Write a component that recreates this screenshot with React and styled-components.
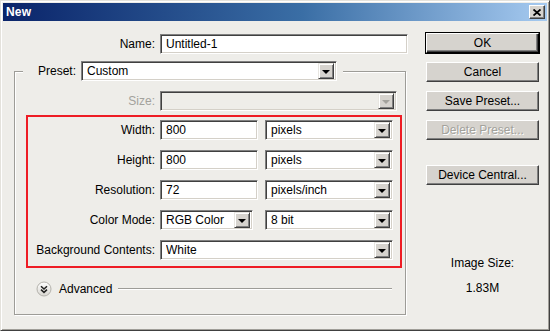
import * as React from "react";
import styled, { createGlobalStyle } from "styled-components";

const Global = createGlobalStyle`
  html, body { margin: 0; padding: 0; background: #eeede9; }
  body { font-family: "Liberation Sans", Arial, sans-serif; font-size: 12px; color: #000; }
`;

/* window frame */
const Window = styled.div`
  width: 550px;
  height: 331px;
  box-sizing: border-box;
  padding: 3px;
  background: #eeede9;
  border-top: 1px solid #e4e2dc;
  border-left: 1px solid #e4e2dc;
  border-right: 1px solid #404040;
  border-bottom: 1px solid #404040;
  box-shadow: inset 1px 1px 0 #fff, inset -1px -1px 0 #a09e98;
  display: flex;
  flex-direction: column;
`;

const TitleBar = styled.div`
  height: 18px;
  margin: -1px -1px 0 -1px;
  background: linear-gradient(to right, #0a246a 0%, #3a6ea5 55%, #a6caf0 100%);
  display: flex;
  align-items: center;
  justify-content: space-between;
  padding: 0 2px 0 3px;
`;

const Title = styled.span`
  color: #fff;
  font-weight: bold;
  font-size: 12px;
  letter-spacing: 0.2px;
`;

const CloseBox = styled.div`
  width: 14px;
  height: 12px;
  background: #d6d3ce;
  border-top: 1px solid #fff;
  border-left: 1px solid #fff;
  border-right: 1px solid #404040;
  border-bottom: 1px solid #404040;
  box-shadow: inset -1px -1px 0 #808080;
  display: flex;
  align-items: center;
  justify-content: center;
`;

const Body = styled.div`
  display: flex;
  flex: 1;
`;

const LeftCol = styled.div`
  width: 406px;
  display: flex;
  flex-direction: column;
`;

const RightCol = styled.div`
  width: 113px;
  margin-left: 16px;
  padding-top: 12px;
  display: flex;
  flex-direction: column;
  align-items: stretch;
`;

const Row = styled.div`
  display: flex;
  align-items: center;
  height: 20px;
  margin-top: ${(p) => p.$mt || 0}px;
`;

const Label = styled.span`
  box-sizing: border-box;
  width: ${(p) => p.$w}px;
  text-align: right;
  padding-right: 5px;
  flex-shrink: 0;
  white-space: nowrap;
  color: ${(p) => (p.$disabled ? "#a3a29c" : "#000")};
`;

const sunken = `
  box-sizing: border-box;
  border-top: 1px solid #808080;
  border-left: 1px solid #808080;
  border-right: 1px solid #fff;
  border-bottom: 1px solid #fff;
  box-shadow: inset 1px 1px 0 #404040, inset -1px -1px 0 #d4d0c8;
`;

const Field = styled.div`
  ${sunken}
  width: ${(p) => p.$w}px;
  height: 20px;
  background: ${(p) => (p.$disabled ? "#eeede9" : "#fff")};
  display: flex;
  align-items: center;
  padding-left: 5px;
  margin-right: ${(p) => p.$mr || 0}px;
`;

const FieldText = styled.span`
  flex: 1;
  white-space: nowrap;
  overflow: hidden;
`;

const ArrowBtn = styled.div`
  width: 16px;
  height: 16px;
  margin-right: 2px;
  box-sizing: border-box;
  background: #d6d3ce;
  border-top: 1px solid #e8e6e1;
  border-left: 1px solid #e8e6e1;
  border-right: 1px solid #404040;
  border-bottom: 1px solid #404040;
  box-shadow: inset 1px 1px 0 #fff, inset -1px -1px 0 #808080;
  display: flex;
  align-items: center;
  justify-content: center;
`;

const Tri = styled.span`
  width: 0;
  height: 0;
  border-left: 4px solid transparent;
  border-right: 4px solid transparent;
  border-top: 4px solid ${(p) => (p.$disabled ? "#a3a29c" : "#000")};
  margin-top: 1px;
`;

const Select = ({ w, value, disabled, mr }) => (
  <Field $w={w} $disabled={disabled} $mr={mr}>
    <FieldText>{value}</FieldText>
    <ArrowBtn>
      <Tri $disabled={disabled} />
    </ArrowBtn>
  </Field>
);

const Group = styled.fieldset`
  margin: 7px 0 0 10px;
  padding: 0 0 17px 0;
  width: 392px;
  box-sizing: border-box;
  border: 1px solid #9d9c97;
  box-shadow: inset 1px 1px 0 #fff, 1px 1px 0 #fff;
  min-width: 0;
`;

const Legend = styled.legend`
  margin-left: 8px;
  padding: 0 6px 0 8px;
  background: #eeede9;
  display: flex;
  align-items: center;
  height: 20px;
`;

const RedBox = styled.div`
  margin: 4px 0 0 11px;
  width: 376px;
  box-sizing: border-box;
  border: 2px solid #ee1c24;
  padding: 3px 0 6px 0;
  display: flex;
  flex-direction: column;
  gap: 10px;
`;

const AdvRow = styled.div`
  display: flex;
  align-items: center;
  margin: 13px 0 0 21px;
  height: 16px;
`;

const AdvText = styled.span`
  margin-left: 7px;
`;

const Rule = styled.div`
  height: 0;
  width: 274px;
  margin-left: 6px;
  border-top: 1px solid #9d9c97;
  border-bottom: 1px solid #fff;
`;

const Button = styled.div`
  height: 20px;
  box-sizing: border-box;
  margin-top: ${(p) => p.$mt || 0}px;
  background: #d6d3ce;
  border-top: 1px solid #fff;
  border-left: 1px solid #fff;
  border-right: 1px solid ${(p) => (p.$default ? "#000" : "#404040")};
  border-bottom: 1px solid ${(p) => (p.$default ? "#000" : "#404040")};
  box-shadow: ${(p) =>
    p.$default
      ? "inset -1px -1px 0 #404040, inset -2px -2px 0 #808080"
      : "inset -1px -1px 0 #808080"};
  outline: ${(p) => (p.$default ? "1px solid #000" : "none")};
  display: flex;
  align-items: center;
  justify-content: center;
  color: ${(p) => (p.$disabled ? "#a3a29c" : "#000")};
  text-shadow: ${(p) => (p.$disabled ? "1px 1px 0 #fff" : "none")};
`;

const Info = styled.div`
  text-align: center;
  margin-top: ${(p) => p.$mt}px;
  line-height: 14px;
`;

const ChevronIcon = () => (
  <svg width="16" height="16" viewBox="0 0 16 16">
    <defs>
      <linearGradient id="cg" x1="0" y1="0" x2="0" y2="1">
        <stop offset="0" stopColor="#ffffff" />
        <stop offset="1" stopColor="#d8d6d0" />
      </linearGradient>
    </defs>
    <circle cx="8" cy="8" r="7" fill="url(#cg)" stroke="#b4b2ac" />
    <path d="M5 5.2 L8 8 L11 5.2 M5 8.6 L8 11.4 L11 8.6" fill="none" stroke="#222" strokeWidth="1.5" />
  </svg>
);

const CloseIcon = () => (
  <svg width="8" height="7" viewBox="0 0 8 7">
    <path d="M0.5 0.5 L7.5 6.5 M7.5 0.5 L0.5 6.5" stroke="#000" strokeWidth="1.8" />
  </svg>
);

export default function App() {
  return (
    <>
      <Global />
      <Window>
        <TitleBar>
          <Title>New</Title>
          <CloseBox>
            <CloseIcon />
          </CloseBox>
        </TitleBar>
        <Body>
          <LeftCol>
            <Row $mt={13}>
              <Label $w={156}>Name:</Label>
              <Field $w={248}>
                <FieldText>Untitled-1</FieldText>
              </Field>
            </Row>
            <Group>
              <Legend>
                <Label $w={50}>Preset:</Label>
                <Select w={256} value="Custom" />
              </Legend>
              <Row $mt={10}>
                <Label $w={145} $disabled>Size:</Label>
                <Select w={237} value="" disabled />
              </Row>
              <RedBox>
                <Row>
                  <Label $w={132}>Width:</Label>
                  <Field $w={98} $mr={7}>
                    <FieldText>800</FieldText>
                  </Field>
                  <Select w={128} value="pixels" />
                </Row>
                <Row>
                  <Label $w={132}>Height:</Label>
                  <Field $w={98} $mr={7}>
                    <FieldText>800</FieldText>
                  </Field>
                  <Select w={128} value="pixels" />
                </Row>
                <Row>
                  <Label $w={132}>Resolution:</Label>
                  <Field $w={98} $mr={7}>
                    <FieldText>72</FieldText>
                  </Field>
                  <Select w={128} value="pixels/inch" />
                </Row>
                <Row>
                  <Label $w={132}>Color Mode:</Label>
                  <Select w={93} value="RGB Color" mr={12} />
                  <Select w={128} value="8 bit" />
                </Row>
                <Row>
                  <Label $w={132}>Background Contents:</Label>
                  <Select w={233} value="White" />
                </Row>
              </RedBox>
              <AdvRow>
                <ChevronIcon />
                <AdvText>Advanced</AdvText>
                <Rule />
              </AdvRow>
            </Group>
          </LeftCol>
          <RightCol>
            <Button $default>OK</Button>
            <Button $mt={9}>Cancel</Button>
            <Button $mt={9}>Save Preset...</Button>
            <Button $mt={9} $disabled>Delete Preset...</Button>
            <Button $mt={25}>Device Central...</Button>
            <Info $mt={71}>Image Size:</Info>
            <Info $mt={11}>1.83M</Info>
          </RightCol>
        </Body>
      </Window>
    </>
  );
}
